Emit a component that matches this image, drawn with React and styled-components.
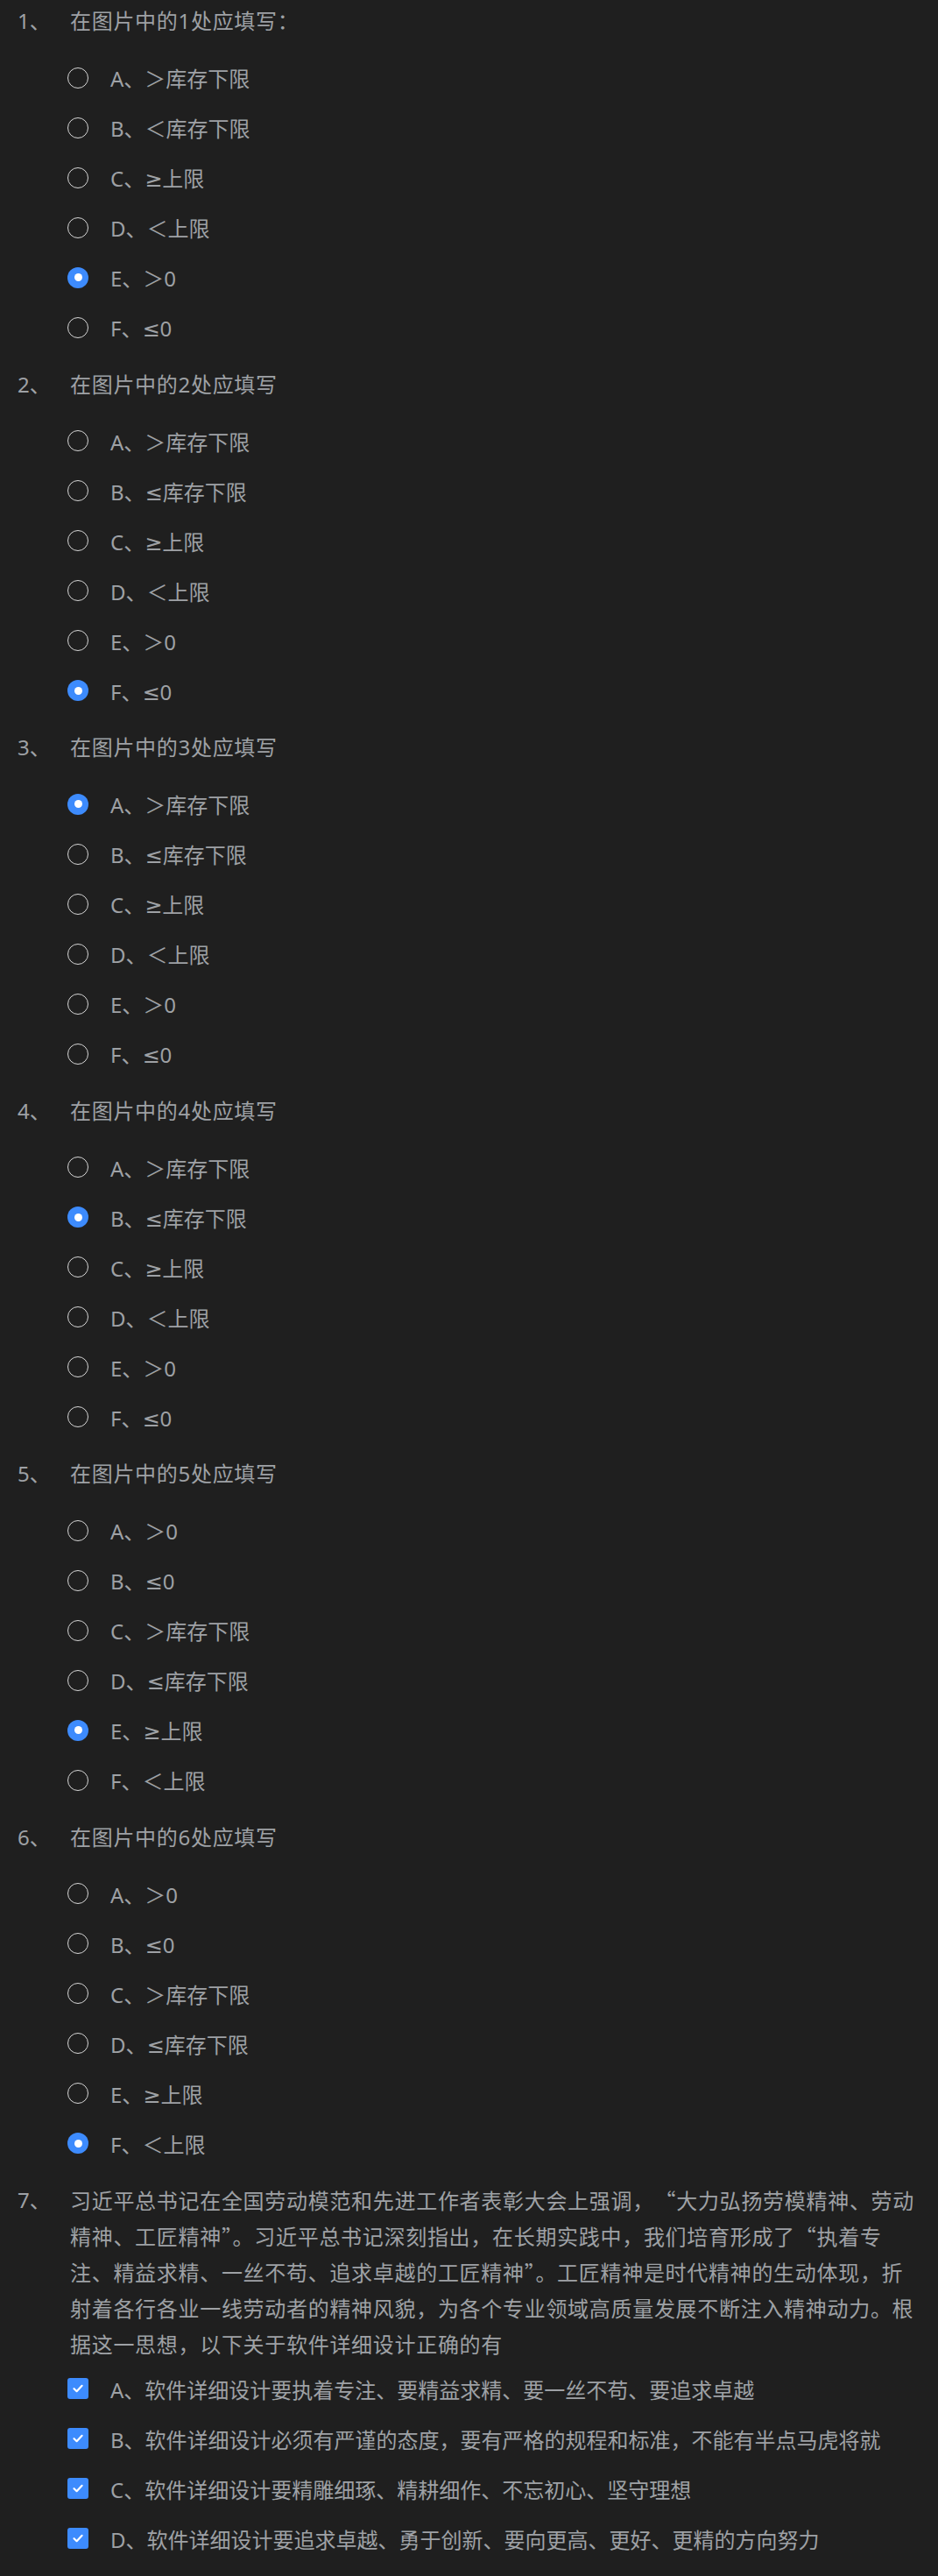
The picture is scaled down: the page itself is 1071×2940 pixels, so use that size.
import React from "react";
import styled, { createGlobalStyle } from "styled-components";

const GlobalStyle = createGlobalStyle`
  body {
    margin: 0;
    background: #1f1f1f;
  }
`;

const PageContainer = styled.div`
  display: flex;
  flex-direction: column;
  padding-top: 3px;
  min-height: 2940px;
  box-sizing: border-box;
  background: #1f1f1f;
  color: #9ea1a5;
  font-family: "Noto Sans", "DejaVu Sans", "Noto Sans CJK SC", sans-serif;
  font-size: 24px;
`;

const QuestionBlock = styled.section`
  display: flex;
  flex-direction: column;
  padding-bottom: ${props => (props.$last ? 0 : 15.5)}px;
`;

const Stem = styled.div`
  display: flex;
  line-height: 41px;
`;

const StemNumber = styled.span`
  flex: none;
  width: 80px;
  padding-left: 20px;
  box-sizing: border-box;
`;

const StemText = styled.div`
  width: 965px;
  letter-spacing: 0.7px;
  font-family: ${props =>
    props.$cjk
      ? `"Noto Sans CJK SC", sans-serif`
      : `"Noto Sans", "DejaVu Sans", "Noto Sans CJK SC", sans-serif`};
`;

const OptionList = styled.div`
  display: flex;
  flex-direction: column;
  margin-top: ${props => props.$gap}px;
`;

const OptionRow = styled.label`
  display: flex;
  align-items: center;
  height: 57px;
  padding-left: 77px;
  gap: 25px;
  cursor: pointer;
`;

const RadioMark = styled.span`
  flex: none;
  width: 24px;
  height: 24px;
  border-radius: 50%;
  box-sizing: border-box;
  display: flex;
  align-items: center;
  justify-content: center;
  border: ${props => (props.$checked ? "none" : "1.5px solid #d6d6d6")};
  background: ${props => (props.$checked ? "#3d8bfd" : "transparent")};

  &::after {
    content: "";
    display: ${props => (props.$checked ? "block" : "none")};
    width: 9px;
    height: 9px;
    border-radius: 50%;
    background: #ffffff;
  }
`;

const CheckMark = styled.span`
  flex: none;
  width: 24px;
  height: 24px;
  border-radius: 3px;
  background: #3d8bfd;
  display: flex;
  align-items: center;
  justify-content: center;
`;

const OptionText = styled.span`
  white-space: nowrap;
`;

const stdOptions = ["＞库存下限", "≤库存下限", "≥上限", "＜上限", "＞0", "≤0"];
const swapOptions = ["＞0", "≤0", "＞库存下限", "≤库存下限", "≥上限", "＜上限"];

const radioQuestions = [
  {
    title: "在图片中的1处应填写：",
    options: ["＞库存下限", "＜库存下限", "≥上限", "＜上限", "＞0", "≤0"],
    answer: 4
  },
  { title: "在图片中的2处应填写", options: stdOptions, answer: 5 },
  { title: "在图片中的3处应填写", options: stdOptions, answer: 0 },
  { title: "在图片中的4处应填写", options: stdOptions, answer: 1 },
  { title: "在图片中的5处应填写", options: swapOptions, answer: 4 },
  { title: "在图片中的6处应填写", options: swapOptions, answer: 5 }
];

const essayStem =
  "习近平总书记在全国劳动模范和先进工作者表彰大会上强调，　“大力弘扬劳模精神、劳动精神、工匠精神”。习近平总书记深刻指出，在长期实践中，我们培育形成了“执着专注、精益求精、一丝不苟、追求卓越的工匠精神”。工匠精神是时代精神的生动体现，折射着各行各业一线劳动者的精神风貌，为各个专业领域高质量发展不断注入精神动力。根据这一思想，以下关于软件详细设计正确的有";

const essayOptions = [
  "软件详细设计要执着专注、要精益求精、要一丝不苟、要追求卓越",
  "软件详细设计必须有严谨的态度，要有严格的规程和标准，不能有半点马虎将就",
  "软件详细设计要精雕细琢、精耕细作、不忘初心、坚守理想",
  "软件详细设计要追求卓越、勇于创新、要向更高、更好、更精的方向努力"
];

const letters = ["A", "B", "C", "D", "E", "F"];

const CheckIcon = () => (
  <svg width="16" height="16" viewBox="0 0 16 16" fill="none">
    <path
      d="M3.5 8.2 L6.6 11.2 L12.6 4.8"
      stroke="#ffffff"
      strokeWidth="2.2"
      strokeLinecap="round"
      strokeLinejoin="round"
    />
  </svg>
);

const App = () => {
  const renderRadioQuestion = (question, index) => (
    <QuestionBlock key={question.title}>
      <Stem>
        <StemNumber>{index + 1}、</StemNumber>
        <StemText>{question.title}</StemText>
      </Stem>
      <OptionList $gap={16}>
        {question.options.map((text, i) => (
          <OptionRow key={letters[i]}>
            <RadioMark $checked={i === question.answer} />
            <OptionText>
              {letters[i]}、{text}
            </OptionText>
          </OptionRow>
        ))}
      </OptionList>
    </QuestionBlock>
  );

  return (
    <PageContainer>
      <GlobalStyle />
      {radioQuestions.map(renderRadioQuestion)}
      <QuestionBlock $last>
        <Stem>
          <StemNumber>7、</StemNumber>
          <StemText $cjk>{essayStem}</StemText>
        </Stem>
        <OptionList $gap={2.5}>
          {essayOptions.map((text, i) => (
            <OptionRow key={letters[i]}>
              <CheckMark>
                <CheckIcon />
              </CheckMark>
              <OptionText>
                {letters[i]}、{text}
              </OptionText>
            </OptionRow>
          ))}
        </OptionList>
      </QuestionBlock>
    </PageContainer>
  );
};

export default App;
